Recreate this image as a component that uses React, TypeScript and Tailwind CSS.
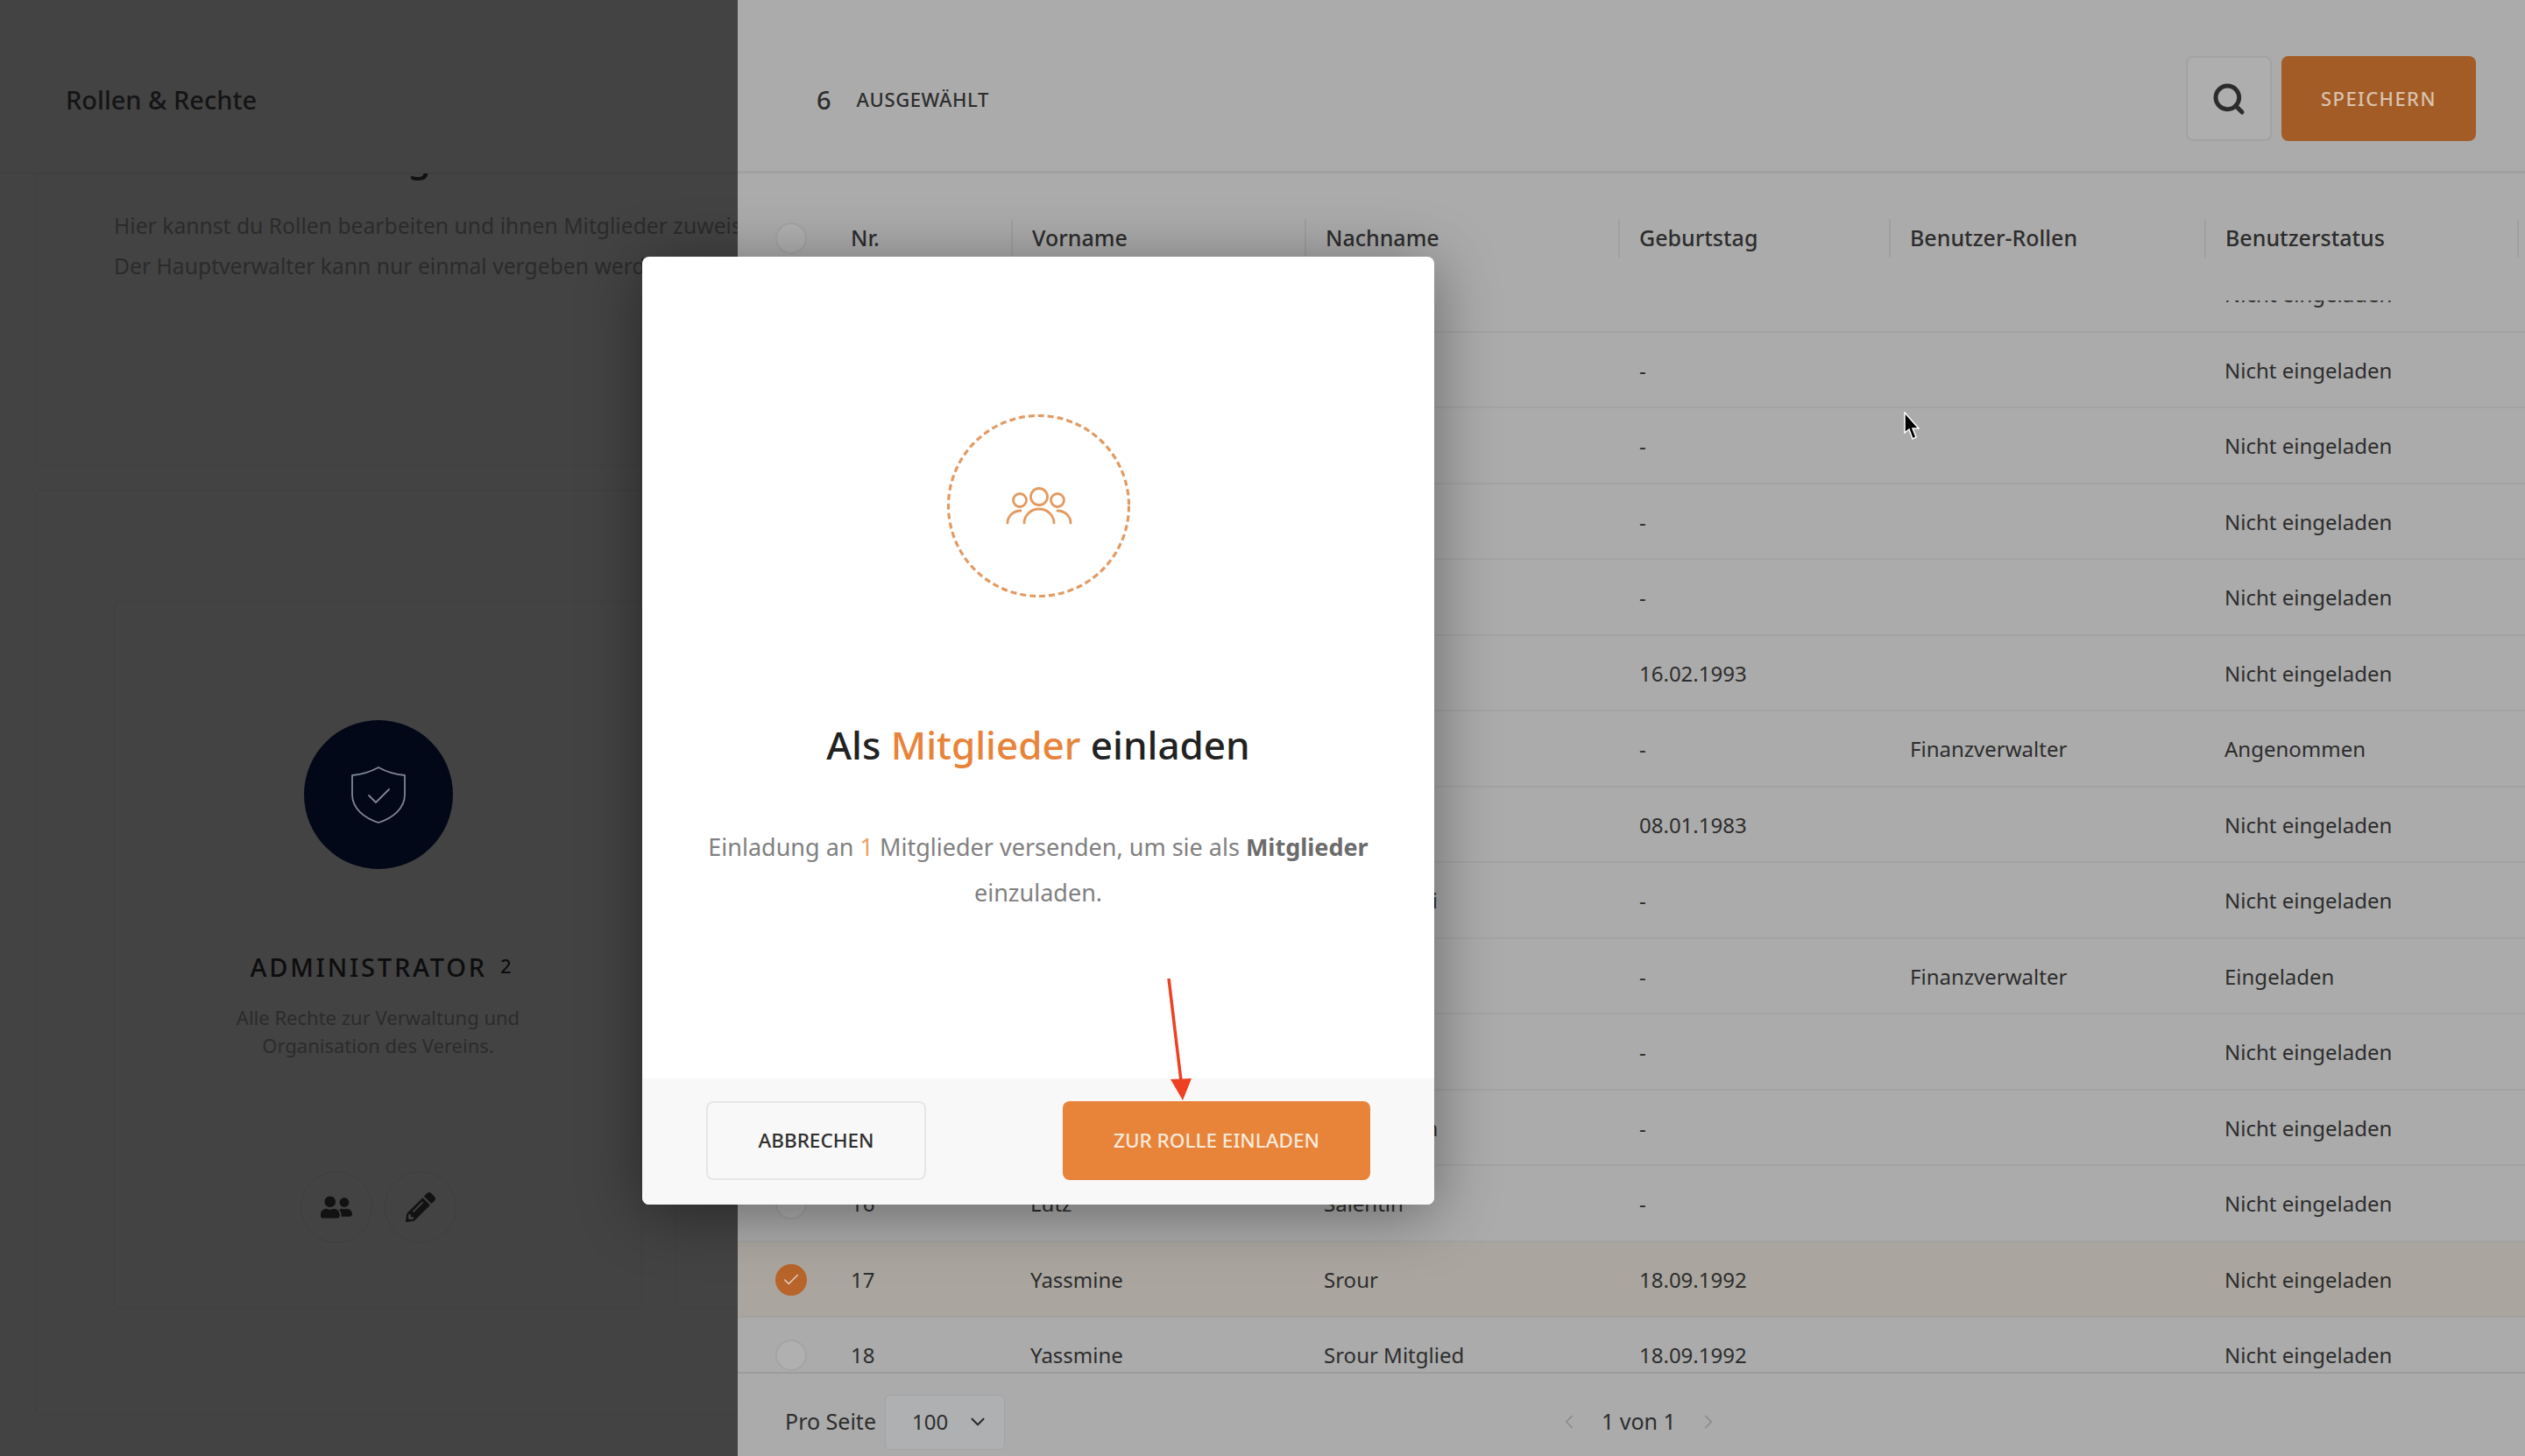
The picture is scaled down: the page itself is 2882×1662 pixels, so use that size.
import { ChevronDown, ChevronLeft, ChevronRight, Check, Search } from "lucide-react";
import { FaPencilAlt, FaUserFriends } from "react-icons/fa";

type Row = {
  nr: string;
  first: string;
  last: string;
  birthday: string;
  role: string;
  status: string;
  selected?: boolean;
};

const rows: Row[] = [
  { nr: "", first: "", last: "", birthday: "", role: "", status: "Nicht eingeladen" },
  { nr: "", first: "", last: "", birthday: "-", role: "", status: "Nicht eingeladen" },
  { nr: "", first: "", last: "", birthday: "-", role: "", status: "Nicht eingeladen" },
  { nr: "", first: "", last: "", birthday: "-", role: "", status: "Nicht eingeladen" },
  { nr: "", first: "", last: "", birthday: "-", role: "", status: "Nicht eingeladen" },
  { nr: "", first: "", last: "", birthday: "16.02.1993", role: "", status: "Nicht eingeladen" },
  { nr: "", first: "", last: "", birthday: "-", role: "Finanzverwalter", status: "Angenommen" },
  { nr: "", first: "", last: "", birthday: "08.01.1983", role: "", status: "Nicht eingeladen" },
  { nr: "", first: "", last: "Kowalewski", birthday: "-", role: "", status: "Nicht eingeladen" },
  { nr: "", first: "", last: "", birthday: "-", role: "Finanzverwalter", status: "Eingeladen" },
  { nr: "", first: "", last: "", birthday: "-", role: "", status: "Nicht eingeladen" },
  { nr: "", first: "", last: "Hohenstein", birthday: "-", role: "", status: "Nicht eingeladen" },
  { nr: "16", first: "Lutz", last: "Salentin", birthday: "-", role: "", status: "Nicht eingeladen" },
  { nr: "17", first: "Yassmine", last: "Srour", birthday: "18.09.1992", role: "", status: "Nicht eingeladen", selected: true },
  { nr: "18", first: "Yassmine", last: "Srour Mitglied", birthday: "18.09.1992", role: "", status: "Nicht eingeladen" },
];

const columns = ["Vorname", "Nachname", "Geburtstag", "Benutzer-Rollen", "Benutzerstatus"];

function Checkbox({ checked }: { checked?: boolean }) {
  if (checked) {
    return (
      <span className="flex h-[36px] w-[36px] shrink-0 items-center justify-center rounded-full bg-[#b8642a]">
        <Check size={22} strokeWidth={1.5} className="text-[#e6d6c8]" />
      </span>
    );
  }
  return <span className="block h-[36px] w-[36px] shrink-0 rounded-full border-2 border-[#a4a4a4] bg-[#b0b0b0]" />;
}

function RoleCard() {
  return (
    <div className="flex h-[808px] w-[603px] shrink-0 flex-col items-center rounded-[8px] border border-[#3f3f3f] pt-[135px]">
      <div className="flex h-[170px] w-[170px] items-center justify-center rounded-full bg-[#020817]">
        <svg width="64" height="67" viewBox="0 0 64 67" fill="none" stroke="#7d8894" strokeWidth="1.8" strokeLinejoin="round" strokeLinecap="round">
          <path d="M32 2 C41 7 51 10 62 11 L62 33 C62 49 48 60 32 65 C16 60 2 49 2 33 L2 11 C13 10 23 7 32 2 Z" />
          <path d="M21 34 L29 42 L44 27" />
        </svg>
      </div>
      <div className="mt-[90px] ml-[6px] flex items-start gap-[15px] text-[#0d0d0d]">
        <span className="text-[29px] leading-[44px] font-medium tracking-[2.8px]">ADMINISTRATOR</span>
        <span className="text-[22px] leading-[40px] font-medium">2</span>
      </div>
      <p className="mt-[19px] w-[400px] text-center text-[22px] leading-[32px] text-[#2b2b2b]">
        Alle Rechte zur Verwaltung und Organisation des Vereins.
      </p>
      <div className="mt-[128px] flex gap-[14px]">
        <span className="flex h-[82px] w-[82px] items-center justify-center rounded-full border border-[#3e3e3e]">
          <FaUserFriends size={36} className="text-[#121212]" />
        </span>
        <span className="flex h-[82px] w-[82px] items-center justify-center rounded-full border border-[#3e3e3e]">
          <FaPencilAlt size={34} className="text-[#121212]" />
        </span>
      </div>
    </div>
  );
}

export default function App() {
  return (
    <div className="relative flex h-[1662px] w-[2882px] overflow-hidden bg-[#ababab] font-['Noto_Sans',sans-serif] text-[#2d2d2d]">
      {/* Left: roles */}
      <aside className="flex w-[842px] shrink-0 flex-col overflow-hidden bg-[#434343]">
        <header className="flex h-[198px] shrink-0 items-center border-b border-[#3e3e3e] px-[75px] pt-[30px]">
          <h2 className="text-[29px] font-medium whitespace-nowrap text-[#141414]">Rollen &amp; Rechte</h2>
        </header>
        <div className="flex flex-col overflow-hidden px-[40px]">
          <section className="h-[334px] w-[900px] shrink-0 rounded-[8px] border border-[#3f3f3f] px-[89px]">
            <h3 className="mt-[-54px] text-[43px] leading-[70px] font-medium whitespace-nowrap text-[#111111]">
              Rollenverwaltung
            </h3>
            <p className="mt-[20px] text-[24.7px] leading-[46px] whitespace-nowrap text-[#2b2b2b]">
              Hier kannst du Rollen bearbeiten und ihnen Mitglieder zuweisen.
              <br />
              Der Hauptverwalter kann nur einmal vergeben werden.
            </p>
          </section>
          <section className="mt-[27px] flex h-[1056px] w-[900px] shrink-0 gap-[38px] rounded-[8px] border border-[#3f3f3f] px-[89px] pt-[126px]">
            <RoleCard />
            <div className="h-[808px] w-[200px] shrink-0 rounded-[8px] border border-[#3f3f3f]" />
          </section>
        </div>
      </aside>

      {/* Right: member table */}
      <main className="flex min-w-0 flex-1 flex-col">
        <header className="flex h-[198px] shrink-0 items-center justify-between border-b-[3px] border-[#a1a1a1] pt-[30px] pr-[56px] pl-[90px]">
          <div className="flex items-center gap-[29px] pt-[2px]">
            <span className="text-[29px] font-medium">6</span>
            <span className="text-[22px] font-medium tracking-[0.6px]">AUSGEWÄHLT</span>
          </div>
          <div className="flex gap-[11px]">
            <button className="flex h-[97px] w-[98px] items-center justify-center rounded-[8px] border-2 border-[#a2a2a2] bg-[#aeaeae]">
              <Search size={40} strokeWidth={3} className="text-[#2c2c2c]" />
            </button>
            <button className="h-[97px] w-[222px] rounded-[8px] bg-[#a35c26] text-[22px] font-medium tracking-[1.4px] text-[#d9c2ae]">
              SPEICHERN
            </button>
          </div>
        </header>

        <div className="grid h-[145px] shrink-0 grid-cols-[312px_335px_358px_309px_360px_357px_1fr] items-start pt-[52px]">
          <div className="flex h-[44px] items-center gap-[50px] pl-[43px]">
            <Checkbox />
            <span className="text-[25px] font-medium">Nr.</span>
          </div>
          {columns.map((c) => (
            <div key={c} className="flex h-[44px] items-center border-l-2 border-[#a0a0a0] pl-[22px] text-[25px] font-medium whitespace-nowrap">
              {c}
            </div>
          ))}
          <div className="h-[44px] border-l-2 border-[#a0a0a0]" />
        </div>

        <div className="h-[1223px] shrink-0 overflow-hidden">
          <div className="mt-[-50px]">
            {rows.map((r, i) => (
              <div
                key={i}
                className={
                  r.selected
                    ? "grid h-[86.5px] grid-cols-[312px_335px_358px_309px_360px_357px_1fr] items-center border-b-2 border-[#a3a29c] bg-[#aaa69f] pt-[2px] text-[24px]"
                    : "grid h-[86.5px] grid-cols-[312px_335px_358px_309px_360px_357px_1fr] items-center border-b-2 border-[#a3a3a3] pt-[2px] text-[24px]"
                }
              >
                <div className="flex items-center gap-[50px] pl-[43px]">
                  <Checkbox checked={r.selected} />
                  <span>{r.nr}</span>
                </div>
                <div className="pl-[22px] whitespace-nowrap">{r.first}</div>
                <div className="pl-[22px] whitespace-nowrap">{r.last}</div>
                <div className="pl-[24px] whitespace-nowrap">{r.birthday}</div>
                <div className="pl-[24px] whitespace-nowrap">{r.role}</div>
                <div className="pl-[23px] whitespace-nowrap">{r.status}</div>
                <div />
              </div>
            ))}
          </div>
        </div>

        <footer className="relative flex h-[96px] shrink-0 items-center border-t-2 border-[#9c9c9c] pt-[16px] pl-[54px]">
          <span className="text-[25px]">Pro Seite</span>
          <div className="ml-[10px] flex h-[63px] w-[137px] items-center gap-[21px] rounded-[6px] border border-[#a3a3a3] bg-[#aeb0b2] pl-[30px]">
            <span className="text-[24px]">100</span>
            <ChevronDown size={26} strokeWidth={2} />
          </div>
          <div className="ml-[631px] flex items-center gap-[24px]">
            <ChevronLeft size={26} strokeWidth={1.5} className="text-[#8a8a8a]" />
            <span className="text-[25px]">1 von 1</span>
            <ChevronRight size={26} strokeWidth={1.5} className="text-[#8a8a8a]" />
          </div>
        </footer>
      </main>

      {/* Invite dialog */}
      <div className="absolute top-[293px] left-[733px] flex h-[1082px] w-[904px] flex-col overflow-hidden rounded-[8px] bg-white shadow-[0_10px_70px_rgba(0,0,0,0.4)]">
        <div className="flex flex-1 flex-col items-center px-[50px] pt-[180px]">
          <svg width="209" height="209" viewBox="0 0 209 209" fill="none" stroke="#e39a60" className="shrink-0">
            <circle cx="104.5" cy="104.5" r="103" strokeWidth="3.2" strokeDasharray="7 4" />
            <g strokeWidth="2.8" strokeLinecap="round">
              <circle cx="105" cy="94" r="9.5" />
              <circle cx="83" cy="98" r="7.5" />
              <circle cx="126" cy="98" r="7.5" />
              <path d="M88 124 A17 16 0 0 1 122 124" />
              <path d="M69 124 A15 14 0 0 1 84 110" />
              <path d="M141 124 A15 14 0 0 0 126 110" />
            </g>
          </svg>
          <h1 className="mt-[132px] text-[44px] leading-[72px] font-medium whitespace-nowrap text-[#222222]">
            Als <span className="text-[#e8833a]">Mitglieder</span> einladen
          </h1>
          <p className="mt-[55px] text-center text-[27px] leading-[52px] text-[#808080]">
            Einladung an <span className="text-[#eb9f62]">1</span> Mitglieder versenden, um sie als{" "}
            <span className="font-bold text-[#6c6c6c]">Mitglieder</span> einzuladen.
          </p>
        </div>
        <div className="flex h-[144px] shrink-0 items-start justify-between bg-[#f8f8f8] px-[73px] pt-[26px]">
          <button className="h-[90px] w-[251px] rounded-[8px] border-2 border-[#e6e6e6] text-[22.5px] font-medium text-[#2f2f2f]">
            ABBRECHEN
          </button>
          <button className="h-[90px] w-[351px] rounded-[8px] bg-[#e8833a] text-[22.5px] font-medium text-[#fbeadb]">
            ZUR ROLLE EINLADEN
          </button>
        </div>
      </div>

      {/* Red annotation arrow */}
      <svg className="absolute top-[1110px] left-[1325px]" width="45" height="150" viewBox="0 0 45 150" fill="none">
        <line x1="9" y1="7" x2="23" y2="124" stroke="#ee4023" strokeWidth="3.5" />
        <polygon points="11,122 35,121 25,146" fill="#ee4023" />
      </svg>

      {/* Mouse cursor */}
      <svg className="absolute top-[470px] left-[2172px]" width="20" height="34" viewBox="0 0 20 34">
        <path d="M2 1 L2 24 L7 20 L11 31 L15 29 L11 19 L18 19 Z" fill="#000" stroke="#fff" strokeWidth="1.5" />
      </svg>
    </div>
  );
}
